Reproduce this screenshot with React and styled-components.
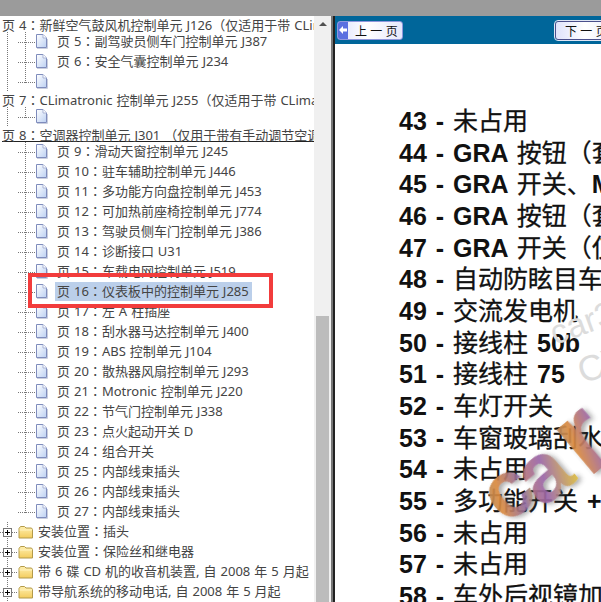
import styled, { createGlobalStyle } from 'styled-components';

const GlobalStyle = createGlobalStyle`
  html, body { margin: 0; padding: 0; background: #fff; }
`;

const Page = styled.div`
  width: 601px;
  height: 602px;
  overflow: hidden;
  position: relative;
  display: flex;
  flex-direction: column;
  font-family: "Noto Sans", "Noto Sans CJK SC", sans-serif;
`;

const TopBar = styled.div`
  height: 16px;
  flex: none;
  background: #9b9b9b;
`;

const Body = styled.div`
  flex: 1;
  min-height: 0;
  display: flex;
`;

const TreePane = styled.div`
  width: 314px;
  flex: none;
  padding-top: 1px;
  overflow: hidden;
  background: #fff;
`;

const Scrollbar = styled.div`
  width: 17px;
  flex: none;
  background: #f0f0f0;
  display: flex;
  flex-direction: column;
  align-items: center;
`;

const ScrollArrow = styled.div`
  margin-top: 6px;
  width: 0;
  height: 0;
  border-left: 4px solid transparent;
  border-right: 4px solid transparent;
  border-bottom: 4px solid #505050;
`;

const ScrollThumb = styled.div`
  margin-top: auto;
  width: 13px;
  height: 286px;
  background: #bcbcbc;
`;

const Divider = styled.div`
  width: 4px;
  flex: none;
  background: linear-gradient(to right, #777 0, #777 2px, #222 2px, #222 4px);
`;

const ContentPane = styled.div`
  flex: 1;
  min-width: 0;
  display: flex;
  flex-direction: column;
`;

const NavBar = styled.div`
  height: 28px;
  flex: none;
  background: #00669a;
  display: flex;
  align-items: center;
  justify-content: space-between;
  padding-left: 2px;
  margin-right: -20px;
`;

const NavButton = styled.div`
  width: 66px;
  height: 19px;
  box-sizing: border-box;
  display: flex;
  align-items: center;
  background: linear-gradient(to right, #dfe3fb, #fff 45%, #e6e8fb);
  border: 1px solid ${p => (p.$next ? '#4a4f8c' : '#8f97dc')};
  border-radius: 3px;
  outline: ${p => (p.$next ? '1px solid #dfe6f5' : 'none')};
  font: 12px "Liberation Sans", "Noto Sans CJK SC", sans-serif;
  color: #111;
  overflow: hidden;
`;

const NavArrow = styled.span`
  width: 10px;
  align-self: stretch;
  flex: none;
  background: #5a6fe0;
  display: flex;
  align-items: center;
  justify-content: center;
`;

const NavLabel = styled.span`
  padding-left: ${p => (p.$next ? '9px' : '7px')};
  white-space: pre;
`;

const Article = styled.div`
  flex: 1;
  padding: 62px 0 0 64px;
  overflow: hidden;
  background: #fff;
`;

const Line = styled.div`
  height: 31.67px;
  line-height: 31.67px;
  font-family: "Liberation Sans", "Noto Sans CJK SC", sans-serif;
  font-size: 25px;
  word-spacing: 2px;
  color: #111;
  white-space: nowrap;
  -webkit-text-stroke: 0.3px #111;
`;

const Strong = styled.b`
  font-weight: 700;
  -webkit-text-stroke: 0;
`;

const RowBase = styled.div`
  display: flex;
  align-items: center;
  white-space: nowrap;
  font-size: 13px;
  word-spacing: 0.6px;
  color: #444;
`;

const ParentRow = styled(RowBase)`
  height: 15px;
  padding-left: 2px;
`;

const ParentLabel = styled.span`
  ${p => p.$underline && `
    flex: 1;
    border-bottom: 1px solid #222;
    line-height: 15px;
    height: 14px;
  `}
`;

const CenteredPunct = styled.span`
  font-family: "Noto Sans CJK TC", sans-serif;
`;

const ChildRow = styled(RowBase)`
  height: 20px;
`;

const Indent = styled.span`
  width: 18px;
  height: 100%;
  flex: none;
  background-image: ${p => (p.$line ? 'linear-gradient(to bottom, #777 1px, transparent 1px)' : 'none')};
  background-size: 1px 2px;
  background-position: 7px 0;
  background-repeat: repeat-y;
`;

const Elbow = styled.span`
  width: 17px;
  height: 100%;
  flex: none;
  background-image:
    linear-gradient(to bottom, #777 1px, transparent 1px),
    linear-gradient(to right, #777 1px, transparent 1px);
  background-size: 1px 2px, 2px 1px;
  background-position: 7px 0, 8px 10px;
  background-repeat: repeat-y, repeat-x;
  ${p => p.$last && 'mask-image: linear-gradient(to bottom, #000 11px, transparent 11px);'}
`;

const FileGlyph = styled.svg`
  width: 13px;
  height: 15px;
  flex: none;
  margin-top: -1px;
`;

const ChildLabel = styled.span`
  margin-left: 7px;
  padding: 0 3px 0 2px;
  height: 19px;
  line-height: 17px;
  margin-top: -1px;
  background: ${p => (p.$selected ? '#bbcfea' : 'transparent')};
`;

const PlusCell = styled.span`
  width: 18px;
  height: 100%;
  flex: none;
  display: flex;
  align-items: center;
  background-image:
    linear-gradient(to bottom, #777 1px, transparent 1px),
    linear-gradient(to right, #777 1px, transparent 1px);
  background-size: 1px 2px, 2px 1px;
  background-position: 7px 0, 12px 10px;
  background-repeat: repeat-y, repeat-x;
`;

const PlusBox = styled.svg`
  width: 9px;
  height: 9px;
  margin-left: 3px;
  flex: none;
`;

const FolderGlyph = styled.svg`
  width: 15px;
  height: 14px;
  flex: none;
`;

const FolderLabel = styled.span`
  margin-left: 5px;
  line-height: 17px;
  margin-top: -2px;
`;

const RedFrame = styled.div`
  position: absolute;
  left: 28px;
  top: 273px;
  width: 245px;
  height: 35px;
  box-sizing: border-box;
  border: 4px solid #f23c3c;
`;

const Defs = styled.svg`
  position: absolute;
  width: 0;
  height: 0;
`;

const Watermark = styled.svg`
  position: absolute;
  left: 0;
  top: 0;
  pointer-events: none;
`;

const lines = [
  ['43 -', '', '未占用'],
  ['44 -', 'GRA', '按钮（套'],
  ['45 -', 'GRA', '开关、', 'M'],
  ['46 -', 'GRA', '按钮（套'],
  ['47 -', 'GRA', '开关（仅'],
  ['48 -', '', '自动防眩目车'],
  ['49 -', '', '交流发电机'],
  ['50 -', '', '接线柱 ', '50b'],
  ['51 -', '', '接线柱 ', '75'],
  ['52 -', '', '车灯开关'],
  ['53 -', '', '车窗玻璃刮水'],
  ['54 -', '', '未占用'],
  ['55 -', '', '多功能开关 ', '+'],
  ['56 -', '', '未占用'],
  ['57 -', '', '未占用'],
  ['58 -', '', '车外后视镜加'],
];

const childPages = [
  ['页 9：滑动天窗控制单元 J245'],
  ['页 10：驻车辅助控制单元 J446'],
  ['页 11：多功能方向盘控制单元 J453'],
  ['页 12：可加热前座椅控制单元 J774'],
  ['页 13：驾驶员侧车门控制单元 J386'],
  ['页 14：诊断接口 U31'],
  ['页 15：车载电网控制单元 J519'],
  ['页 16：仪表板中的控制单元 J285', true],
  ['页 17：左 A 柱插座'],
  ['页 18：刮水器马达控制单元 J400'],
  ['页 19：ABS 控制单元 J104'],
  ['页 20：散热器风扇控制单元 J293'],
  ['页 21：Motronic 控制单元 J220'],
  ['页 22：节气门控制单元 J338'],
  ['页 23：点火起动开关 D'],
  ['页 24：组合开关'],
  ['页 25：内部线束插头'],
  ['页 26：内部线束插头'],
];

const folders = [
  '安装位置：插头',
  '安装位置：保险丝和继电器',
  '带 6 碟 CD 机的收音机装置, 自 2008 年 5 月起',
  '带导航系统的移动电话, 自 2008 年 5 月起',
];

// full-width colon and bracket sit centred in their cell in the original
const punct = text =>
  text.split(/([：（])/).map((part, i) =>
    part === '：' || part === '（' ? <CenteredPunct key={i}>{part}</CenteredPunct> : part
  );

const FileIcon = () => (
  <FileGlyph viewBox="0 0 13 15">
    <path d="M1.5 .5H8L11.5 4V13.5H1.5Z" fill="url(#fileFill)" stroke="#7f8cbc" />
    <path d="M8 .5V4H11.5" fill="#fff" stroke="#a9b3d4" />
    <path d="M2 14.5H12.5V5" fill="none" stroke="#c9cede" />
  </FileGlyph>
);

const FolderIcon = () => (
  <FolderGlyph viewBox="0 0 15 14">
    <path d="M1 3.5 2.5 1.5H6.5L8 3H13.5L14.5 4.5V13H1Z" fill="url(#folderFill)" stroke="#b39a4a" />
    <path d="M1.5 5H14" stroke="#fff3c0" />
  </FolderGlyph>
);

const Plus = () => (
  <PlusBox viewBox="0 0 9 9">
    <rect x=".5" y=".5" width="8" height="8" fill="#fff" stroke="#777" />
    <path d="M2 4.5H7M4.5 2V7" stroke="#000" />
  </PlusBox>
);

const Child = ({ outer, last, selected, children }) => (
  <ChildRow>
    <Indent $line={outer} />
    <Elbow $last={last} />
    <FileIcon />
    {children && <ChildLabel $selected={selected}>{punct(children)}</ChildLabel>}
  </ChildRow>
);

// one letter of the coloured logo, placed by its centre
const LogoLetter = ({ x, y, size, fill, children }) => (
  <text
    transform={`translate(${x} ${y}) rotate(-40)`}
    y={size * 0.26}
    textAnchor="middle"
    fontFamily="Liberation Sans"
    fontWeight="700"
    fontSize={size}
    fill={`url(#${fill})`}
    opacity=".92"
    filter="url(#carShadow)"
  >
    {children}
  </text>
);

export default function App() {
  return (
    <Page>
      <GlobalStyle />
      <Defs>
        <defs>
          <linearGradient id="fileFill" x1="0" y1="0" x2="1" y2="1">
            <stop offset="0" stopColor="#ffffff" />
            <stop offset="1" stopColor="#bcd0f2" />
          </linearGradient>
          <linearGradient id="folderFill" x1="0" y1="0" x2="0" y2="1">
            <stop offset="0" stopColor="#fff0b0" />
            <stop offset="1" stopColor="#f3cc5e" />
          </linearGradient>
        </defs>
      </Defs>
      <TopBar />
      <Body>
        <TreePane>
          <ParentRow><ParentLabel>{punct('页 4：新鲜空气鼓风机控制单元 J126（仅适用于带 CLimatronic')}</ParentLabel></ParentRow>
          <Child outer>页 5：副驾驶员侧车门控制单元 J387</Child>
          <Child outer>页 6：安全气囊控制单元 J234</Child>
          <Child outer last />
          <ParentRow><ParentLabel>{punct('页 7：CLimatronic 控制单元 J255（仅适用于带 CLimatronic')}</ParentLabel></ParentRow>
          <Child outer last />
          <ParentRow><ParentLabel $underline>{punct('页 8：空调器控制单元 J301 （仅用于带有手动调节空调')}</ParentLabel></ParentRow>
          {childPages.map(([label, selected]) => (
            <Child key={label} selected={selected}>{label}</Child>
          ))}
          <Child last>页 27：内部线束插头</Child>
          {folders.map(label => (
            <ChildRow key={label}>
              <PlusCell><Plus /></PlusCell>
              <FolderIcon />
              <FolderLabel>{punct(label)}</FolderLabel>
            </ChildRow>
          ))}
        </TreePane>
        <Scrollbar>
          <ScrollArrow />
          <ScrollThumb />
        </Scrollbar>
        <Divider />
        <ContentPane>
          <NavBar>
            <NavButton>
              <NavArrow>
                <svg width="8" height="8" viewBox="0 0 8 8"><path d="M0 4 4 0V2.5H8V5.5H4V8Z" fill="#fff" /></svg>
              </NavArrow>
              <NavLabel>上 一 页</NavLabel>
            </NavButton>
            <NavButton $next>
              <NavLabel $next>下 一 页</NavLabel>
            </NavButton>
          </NavBar>
          <Article>
            {lines.map(([num, latin, text, tail]) => (
              <Line key={num}>
                <Strong>{num}</Strong> {latin && <Strong>{latin} </Strong>}{text}{tail && <Strong>{tail}</Strong>}
              </Line>
            ))}
          </Article>
        </ContentPane>
      </Body>
      <RedFrame />
      <Watermark width="601" height="602" viewBox="0 0 601 602">
        <defs>
          <linearGradient id="logoC" x1="0" y1="0" x2="1" y2="1">
            <stop offset="0" stopColor="#8d8a80" />
            <stop offset=".4" stopColor="#d98a40" />
            <stop offset=".7" stopColor="#8f6aa0" />
            <stop offset="1" stopColor="#ecd220" />
          </linearGradient>
          <linearGradient id="logoA" x1="0" y1="0" x2="1" y2="1">
            <stop offset="0" stopColor="#d98a40" />
            <stop offset=".5" stopColor="#9a66a8" />
            <stop offset="1" stopColor="#ecd220" />
          </linearGradient>
          <linearGradient id="logoR" x1="0" y1="0" x2="1" y2="1">
            <stop offset="0" stopColor="#8d8f9a" />
            <stop offset=".4" stopColor="#d98a40" />
            <stop offset=".7" stopColor="#9a66a8" />
            <stop offset="1" stopColor="#ecd220" />
          </linearGradient>
          <filter id="carShadow" x="-20%" y="-20%" width="140%" height="140%">
            <feDropShadow dx="2" dy="3" stdDeviation="2.5" floodColor="#555" floodOpacity=".55" />
          </filter>
        </defs>
        <text transform="translate(555 345) rotate(-20)" fontFamily="Liberation Sans" fontSize="34" fill="#dcdcdc">car3</text>
        <text transform="translate(583 384) rotate(-20)" fontFamily="Liberation Sans" fontSize="36" fill="#dcdcdc">CY</text>
        <LogoLetter x={510} y={495} size={80} fill="logoC">c</LogoLetter>
        <LogoLetter x={546} y={477} size={84} fill="logoA">a</LogoLetter>
        <LogoLetter x={586} y={443} size={110} fill="logoR">r</LogoLetter>
      </Watermark>
    </Page>
  );
}
